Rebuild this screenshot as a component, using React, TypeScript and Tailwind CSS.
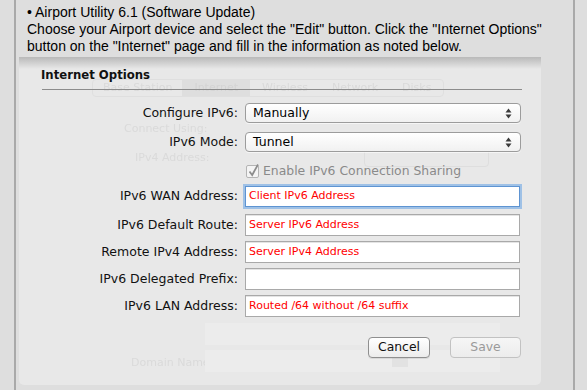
import React from "react";

const ghostText = "text-[#dadada] blur-[0.7px] leading-[12px]";

function Select({ value }: { value: string }) {
  return (
    <div className="relative flex h-[20px] w-[276px] items-center rounded-[4px] border border-[#9c9c9c] bg-gradient-to-b from-[#ffffff] to-[#f1f1f1] pl-[7px] text-[12.5px] text-black shadow-[0_1px_0_rgba(255,255,255,0.6)]">
      {value}
      <svg className="absolute right-[8px] top-[4px]" width="7" height="11" viewBox="0 0 7 11">
        <path d="M3.5 0.5 L6.5 4.5 L0.5 4.5 Z" fill="#3a3a3a" />
        <path d="M3.5 10.5 L6.5 6.5 L0.5 6.5 Z" fill="#3a3a3a" />
      </svg>
    </div>
  );
}

function Field({ value, focused }: { value?: string; focused?: boolean }) {
  return (
    <div
      className={
        focused
          ? "flex h-[21px] w-[275px] items-center border border-[#5e94d2] bg-white pl-[3px] text-[11px] text-[#ff0000] shadow-[0_0_0_2px_#9fc1e6]"
          : "flex h-[22px] w-[275px] items-center border border-[#a9a9a9] bg-white pl-[3px] text-[11px] text-[#ff0000] shadow-[inset_0_1px_0_#e4e4e4]"
      }
      style={{ fontFamily: '"DejaVu Sans", Verdana, sans-serif' }}
    >
      {value}
    </div>
  );
}

function Row({ label, children, h }: { label: string; children: React.ReactNode; h: string }) {
  return (
    <div className={`flex items-center ${h}`}>
      <div className="w-[226px] whitespace-nowrap pr-[7px] text-right text-[12.5px] text-[#111]">{label}</div>
      {children}
    </div>
  );
}

export default function App() {
  return (
    <div className="h-[390px] w-[587px] overflow-hidden bg-[#dedede]">
      <div className="ml-[14px] h-full w-[561px] border-x-2 border-[#a9a9a9] bg-[#dedede]">
        <div
          className="pl-[11px] pt-[4px] text-[14px] leading-[17px] text-black"
          style={{ fontFamily: '"Liberation Sans", Arial, sans-serif' }}
        >
          <div>• Airport Utility 6.1 (Software Update)</div>
          <div>Choose your Airport device and select the "Edit" button. Click the "Internet Options"</div>
          <div>button on the "Internet" page and fill in the information as noted below.</div>
        </div>

        <div
          className="relative ml-[3px] mt-[2px] h-[328px] w-[522px] overflow-hidden rounded-b-[5px] bg-[#e8e8e8]"
          style={{ fontFamily: '"DejaVu Sans", "Lucida Grande", sans-serif' }}
        >
          {/* top shadow */}
          <div className="absolute inset-x-0 top-0 h-[12px] bg-gradient-to-b from-[#b9b9b9] to-[#e8e8e8]" />

          {/* ghost background window */}
          <div className="absolute left-[73px] top-[22px] flex h-[18px] items-center rounded-[4px] border border-[#dfdfdf] text-[11px] leading-[16px]">
            <div className={`px-[10px] ${ghostText}`}>Base Station</div>
            <div className="h-full bg-[#dedede] px-[12px] text-[#d4d4d4] blur-[0.7px]">Internet</div>
            <div className={`px-[12px] ${ghostText}`}>Wireless</div>
            <div className={`px-[12px] ${ghostText}`}>Network</div>
            <div className={`px-[12px] ${ghostText}`}>Disks</div>
          </div>
          <div className={`absolute left-[105px] top-[66px] text-[11px] ${ghostText}`}>Connect Using:</div>
          <div className={`absolute left-[116px] top-[95px] text-[11px] ${ghostText}`}>IPv4 Address:</div>
          <div className="absolute left-[345px] top-[90px] h-[20px] w-[125px] rounded-[4px] border border-[#dedede]" />
          <div className="absolute left-[186px] top-[266px] h-[22px] w-[295px] bg-[#ececec]" />
          <div className={`absolute left-[112px] top-[300px] text-[11px] ${ghostText}`}>Domain Name:</div>
          <div className="absolute left-[186px] top-[293px] h-[22px] w-[295px] bg-[#ececec]" />
          <div className="absolute left-[373px] top-[294px] h-[16px] w-[16px] bg-[#e2e2e2]" />

          {/* content */}
          <div className="relative">
            <div className="pl-[22px] pt-[10px] text-[11.7px] font-bold leading-[16px] text-[#111]">Internet Options</div>
            <div className="ml-[23px] mt-[6px] h-px w-[480px] bg-[#8c8c8c]" />

            <div className="mt-[13px] flex flex-col">
              <Row label="Configure IPv6:" h="h-[20px]">
                <Select value="Manually" />
              </Row>
              <Row label="IPv6 Mode:" h="mt-[9px] h-[20px]">
                <Select value="Tunnel" />
              </Row>
              <div className="mt-[11px] flex h-[16px] items-center pl-[227px] text-[12.4px] text-[#8a8a8a]">
                <div className="relative mr-[4px] h-[13px] w-[13px] rounded-[2px] border border-[#b4b4b4] bg-[#f4f4f4]">
                  <svg className="absolute -top-[3px] left-[0px]" width="13" height="15" viewBox="0 0 13 15">
                    <path d="M2.5 8.5 L5.2 12 L11 1.5" stroke="#8d8d8d" strokeWidth="1.8" fill="none" />
                  </svg>
                </div>
                Enable IPv6 Connection Sharing
              </div>
              <Row label="IPv6 WAN Address:" h="mt-[6px] h-[22px]">
                <Field value="Client IPv6 Address" focused />
              </Row>
              <Row label="IPv6 Default Route:" h="mt-[7px] h-[22px]">
                <Field value="Server IPv6 Address" />
              </Row>
              <Row label="Remote IPv4 Address:" h="mt-[5px] h-[22px]">
                <Field value="Server IPv4 Address" />
              </Row>
              <Row label="IPv6 Delegated Prefix:" h="mt-[5px] h-[22px]">
                <Field />
              </Row>
              <Row label="IPv6 LAN Address:" h="mt-[5px] h-[22px]">
                <Field value="Routed /64 without /64 suffix" />
              </Row>
            </div>

            <div className="mt-[20px] flex justify-end pr-[20px] text-[12.4px]">
              <div className="flex h-[21px] w-[62px] items-center justify-center rounded-[4px] border border-[#8f8f8f] bg-gradient-to-b from-white to-[#ececec] text-[#111] shadow-[0_1px_0_rgba(0,0,0,0.08)]">
                Cancel
              </div>
              <div className="ml-[20px] flex h-[21px] w-[71px] items-center justify-center rounded-[4px] border border-[#c2c2c2] bg-gradient-to-b from-[#f6f6f6] to-[#ececec] text-[#9a9a9a]">
                Save
              </div>
            </div>
          </div>
        </div>
      </div>
    </div>
  );
}
